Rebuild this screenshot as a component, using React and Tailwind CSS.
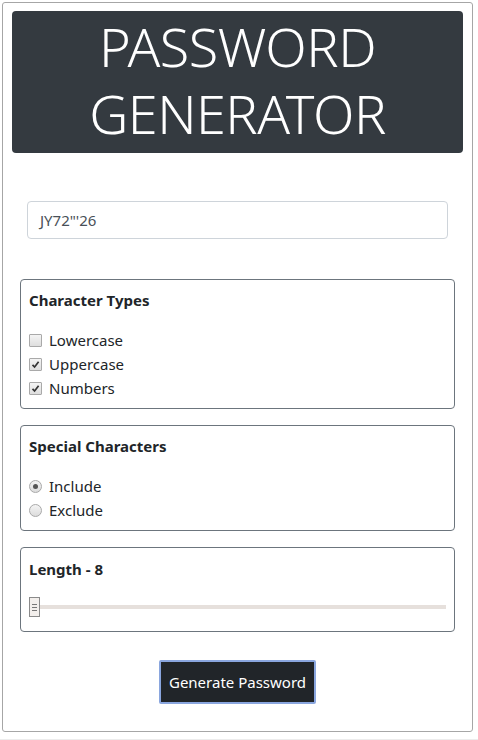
import React, { useState } from 'react';

const font = { fontFamily: '"Noto Sans", "Open Sans", sans-serif' };

const Check = ({ checked }) => (
    <span className="inline-flex items-center justify-center w-[13px] h-[13px] border border-[#a9a9a9] bg-gradient-to-b from-[#f4f4f4] to-[#dedede] rounded-[1px]">
        {checked && (
            <svg width="9" height="9" viewBox="0 0 9 9">
                <path d="M1.5 4.8 L3.6 7 L7.6 1.8" fill="none" stroke="#333" strokeWidth="1.7" />
            </svg>
        )}
    </span>
);

const Radio = ({ checked }) => (
    <span className="inline-flex items-center justify-center w-[13px] h-[13px] border border-[#a9a9a9] bg-gradient-to-b from-[#f4f4f4] to-[#dcdcdc] rounded-full">
        {checked && <span className="w-[5px] h-[5px] rounded-full bg-[#555]" />}
    </span>
);

const Panel = ({ title, children }) => (
    <div className="border border-[#6c757d] rounded-[4px] px-[8px] pt-[8px] pb-[8px]">
        <h5 className="text-[15px] font-bold text-[#212529] leading-[24px] mb-[16px]">{title}</h5>
        {children}
    </div>
);

const App = () => {
    const [types] = useState({ lower: false, upper: true, numbers: true });

    return (
        <div className="h-[740px] bg-[#ececec] overflow-hidden" style={font}>
            <div className="bg-white pt-[2px] px-[2px] pb-[7px]">
                <div className="w-[471px] border border-[#a6a6a6] rounded-[3px] h-[730px] px-[9px] pt-[8px]">
                    <div className="bg-[#343a40] rounded-[4px] h-[142px] flex flex-col items-center justify-center pb-[4px]">
                        <h1 className="text-white text-[54px] font-light leading-[67px] text-center tracking-[-0.5px]">
                            PASSWORD<br />GENERATOR
                        </h1>
                    </div>

                    <div className="px-[15px] mt-[48px]">
                        <div className="h-[38px] border border-[#ced4da] rounded-[4px] flex items-center px-[12px] text-[15px] text-[#495057]">
                            JY72"'26
                        </div>
                    </div>

                    <div className="px-[8px] mt-[40px] flex flex-col gap-[16px]">
                        <Panel title="Character Types">
                            <div className="flex flex-col text-[15px] text-[#212529] leading-[24px]">
                                <label className="flex items-center gap-[7px]"><Check checked={types.lower} />Lowercase</label>
                                <label className="flex items-center gap-[7px]"><Check checked={types.upper} />Uppercase</label>
                                <label className="flex items-center gap-[7px]"><Check checked={types.numbers} />Numbers</label>
                            </div>
                        </Panel>

                        <Panel title="Special Characters">
                            <div className="flex flex-col text-[15px] text-[#212529] leading-[24px]">
                                <label className="flex items-center gap-[7px]"><Radio checked />Include</label>
                                <label className="flex items-center gap-[7px]"><Radio />Exclude</label>
                            </div>
                        </Panel>

                        <div className="border border-[#6c757d] rounded-[4px] px-[8px] pt-[9px] pb-[13px]">
                            <h5 className="text-[15px] font-bold text-[#212529] leading-[24px] mb-[15px]">Length - 8</h5>
                            <div className="relative h-[22px] flex items-center">
                                <div className="w-full h-[4px] bg-[#e6e0dc] ml-[4px]" />
                                <div className="absolute left-0 top-[1px] w-[11px] h-[20px] border border-[#8a8a8a] bg-[#f3efec] flex flex-col items-center justify-center gap-[2px]">
                                    <span className="w-[5px] h-px bg-[#777]" />
                                    <span className="w-[5px] h-px bg-[#777]" />
                                    <span className="w-[5px] h-px bg-[#777]" />
                                </div>
                            </div>
                        </div>
                    </div>

                    <div className="flex justify-center mt-[28px]">
                        <button className="bg-[#212529] text-white text-[15px] leading-[24px] px-[8px] h-[44px] border-2 border-[#8aa6de] rounded-[2px]">
                            Generate Password
                        </button>
                    </div>
                </div>
            </div>
        </div>
    );
};

export default App;
